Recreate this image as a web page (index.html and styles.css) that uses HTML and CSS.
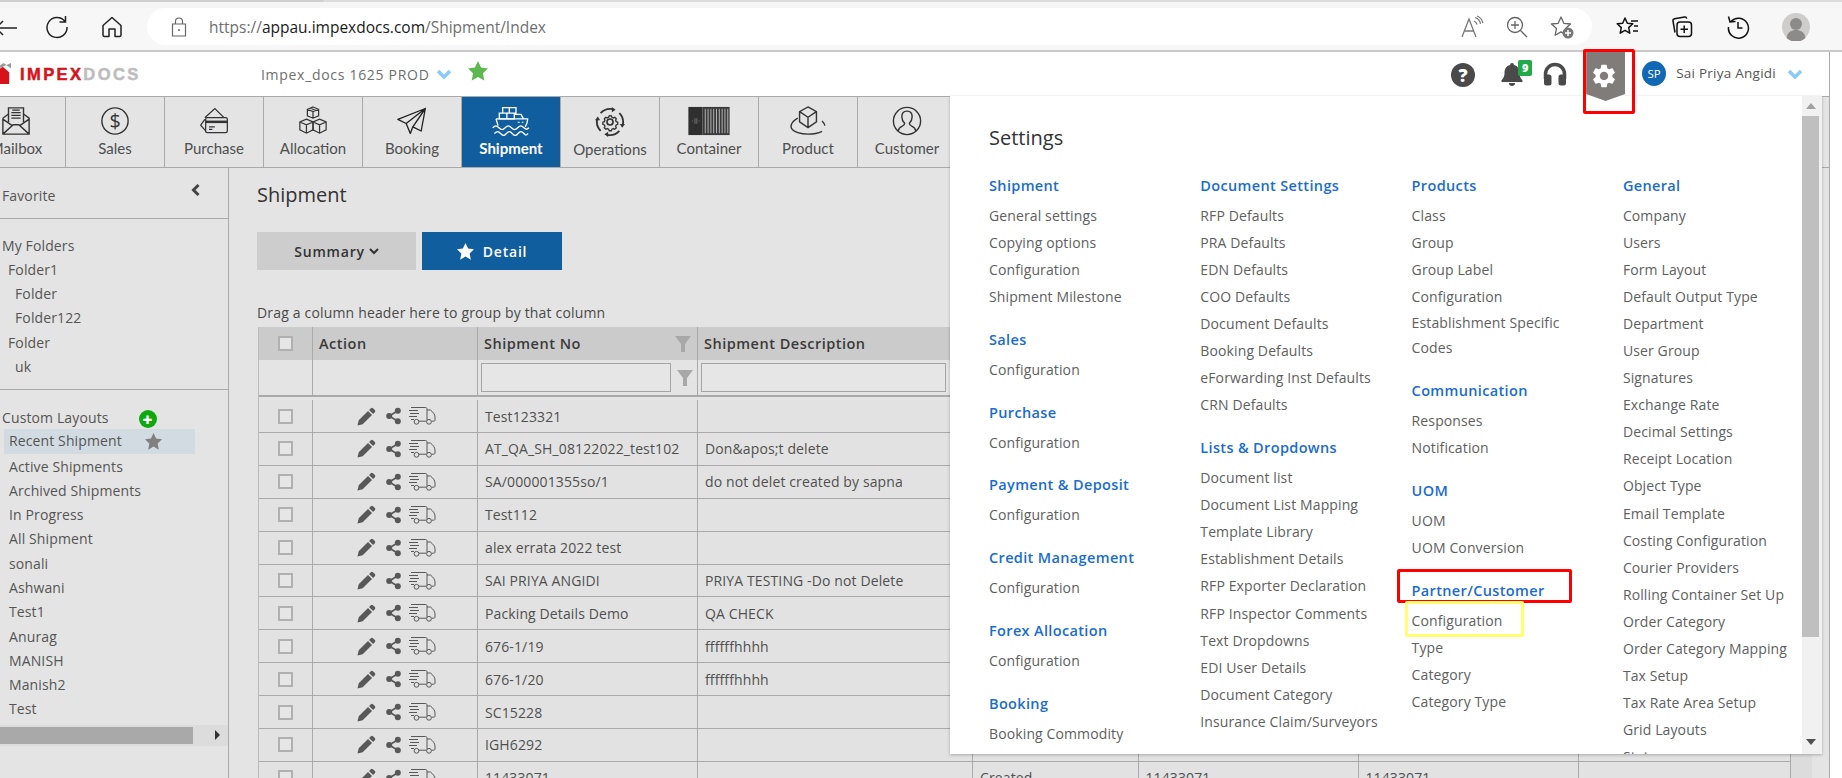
FILE: index.html
```html
<!DOCTYPE html>
<html lang="en">
<head>
<meta charset="utf-8">
<title>Shipment - ImpexDocs</title>
<link rel="stylesheet" href="styles.css">
</head>
<body>
<svg class="defs" width="0" height="0" aria-hidden="true">
  <symbol id="ic-pencil" viewBox="0 0 20 20"><path d="M14.600 1.200a1.600 1.600 0 0 1 2.200 0l2 2a1.600 1.600 0 0 1 0 2.200l-1.900 1.900-4.200-4.200zM11.600 4.200l4.200 4.200L6 18.200 0.500 19.600l1.300-5.600z" fill="currentColor"/></symbol>
  <symbol id="ic-share" viewBox="0 0 16 18"><circle cx="12.600" cy="3.400" r="3.200" fill="currentColor"/><circle cx="3.400" cy="9" r="3.200" fill="currentColor"/><circle cx="12.600" cy="14.600" r="3.200" fill="currentColor"/><path d="M12.600 3.400 3.400 9l9.200 5.600" fill="none" stroke="currentColor" stroke-width="1.800"/></symbol>
  <symbol id="ic-truck" viewBox="0 0 28 20"><g fill="none" stroke="currentColor" stroke-width="1"><path d="M3 1.500h14.500c1 0 1.500.5 1.500 1.500v11.500M19 4h3.500c2.500 2 4.500 4.500 4.500 7v3c0 .8-.5 1.200-1.500 1.200h-1.500M11 15.200h7M1 4.500h9M2 7.500h9M1 10.500h8M3 13.500h3"/><circle cx="8.500" cy="15.800" r="2.400"/><circle cx="21" cy="15.800" r="2.400"/></g></symbol>
  <symbol id="ic-funnel" viewBox="0 0 16 16"><path d="M0 0h16L10 8v8H6V8z" fill="currentColor"/></symbol>
</svg>

<div class="browser-strip"><span class="strip-tab"></span></div>
<div class="browser-bar">
  <svg class="br-icon br-back" viewBox="0 0 24 24"><path d="M24 13H3M10 6l-7 7 7 7" fill="none" stroke="#222" stroke-width="1.500"/></svg>
  <svg class="br-icon br-reload" viewBox="0 0 24 24"><path d="M20 6.500A10 10 0 1 0 22 12M20.500 1v6h-6" fill="none" stroke="#222" stroke-width="1.500"/></svg>
  <svg class="br-icon br-home" viewBox="0 0 24 24"><path d="M3 10.500 12 2.500l9 8V20a1.500 1.500 0 0 1-1.500 1.500H15V14H9v7.500H4.500A1.500 1.500 0 0 1 3 20z" fill="none" stroke="#222" stroke-width="1.500" stroke-linejoin="round"/></svg>
  <div class="url-pill">
    <svg class="lock" viewBox="0 0 16 20"><path d="M4.500 7V4.500a3.500 3.500 0 0 1 7 0V7M1.500 7h13v12h-13z" fill="none" stroke="#666" stroke-width="1.200"/><circle cx="8" cy="13" r="1" fill="#666"/></svg>
    <div class="url"><span class="url-dim">https://</span>appau.impexdocs.com<span class="url-dim">/Shipment/Index</span></div>
    <span class="pill-right">
      <svg class="pill-ic" viewBox="0 0 24 24"><path d="M2 22 9 4l7 18M4.500 16h9" fill="none" stroke="#777" stroke-width="1.300"/><path d="M14 6a5 5 0 0 1 3 3.500M15 2.500a8 8 0 0 1 5.500 6.500M17 1a10 10 0 0 1 6 7" fill="none" stroke="#777" stroke-width="1.200"/></svg>
      <svg class="pill-ic" viewBox="0 0 24 24"><circle cx="10" cy="10" r="7.500" fill="none" stroke="#666" stroke-width="1.300"/><path d="M15.500 15.500 22 22M6 10h8M10 6v8" fill="none" stroke="#666" stroke-width="1.300"/></svg>
      <svg class="pill-ic" viewBox="0 0 24 24"><path d="m11 2 2.800 6.300 6.700.7-5 4.600 1.400 6.700-5.900-3.400-5.900 3.400L6.500 13.600l-5-4.600 6.700-.7z" fill="none" stroke="#666" stroke-width="1.300" stroke-linejoin="round"/><circle cx="18" cy="18" r="5.500" fill="#777"/><path d="M18 15v6M15 18h6" stroke="#fff" stroke-width="1.500"/></svg>
    </span>
  </div>
  <svg class="tool-ic" viewBox="0 0 24 24"><path d="m9 3 2.300 5.200 5.500.6-4.100 3.800 1.100 5.600L9 15.400l-4.800 2.800 1.100-5.600L1.200 8.800l5.500-.6z" fill="none" stroke="#111" stroke-width="1.500" stroke-linejoin="round"/><path d="M15 6h7M18 11h4M17 16h5" stroke="#111" stroke-width="1.500"/></svg>
  <svg class="tool-ic" viewBox="0 0 24 24"><path d="M5 17.500 3 6a2 2 0 0 1 1.600-2.300L14.500 2a2 2 0 0 1 2.300 1.500" fill="none" stroke="#111" stroke-width="1.500"/><rect x="7" y="7" width="14.500" height="14.500" rx="3" fill="none" stroke="#111" stroke-width="1.500"/><path d="M14.200 10.500v7.500M10.500 14.200H18" stroke="#111" stroke-width="1.500"/></svg>
  <svg class="tool-ic" viewBox="0 0 24 24"><path d="M5 6.500A10 10 0 1 1 2.500 12M2.500 1.500 4 7l5.500-.5" fill="none" stroke="#111" stroke-width="1.500"/><path d="M12 7v6h4.500" fill="none" stroke="#111" stroke-width="1.500"/></svg>
  <svg class="profile" viewBox="0 0 28 28"><circle cx="14" cy="14" r="14" fill="#cfcdcb"/><circle cx="14" cy="11" r="6" fill="#8d8b89"/><path d="M4.500 25c1-6 5-8 9.500-8s8.500 2 9.500 8a14 14 0 0 1-19 0z" fill="#8d8b89"/></svg>
</div>

<div class="app">
  <header class="app-header">
    <div class="logo">
      <svg class="logo-mark" viewBox="0 0 12 24"><path d="M-10 10 4 0l8 6v-6" fill="#9a9a9a"/><path d="M-6 11 3 4l7 6v13H-6z" fill="#d8121b"/></svg>
      <span class="logo-text"><span class="logo-red">IMPEX</span><span class="logo-gray">DOCS</span></span>
    </div>
    <span class="ws-name">Impex_docs 1625 PROD</span>
    <svg class="chev chev-ws" viewBox="0 0 16 10"><path d="m2 2 6 6 6-6" fill="none" stroke="#8ccaf7" stroke-width="3.500"/></svg>
    <svg class="ws-star" viewBox="0 0 24 24"><path d="m12 0 3.700 7.900 8.300 1-6.100 5.900 1.600 8.700L12 19.200l-7.500 4.300 1.600-8.700L0 8.900l8.300-1z" fill="#5cb84f"/></svg>
    <div class="header-right">
      <span class="help">?</span>
      <span class="bell-wrap">
        <svg class="bell" viewBox="0 0 24 24"><path d="M12 1a2 2 0 0 1 2 2c4 1 5.500 4 5.500 8 0 4 1.500 5.500 3 7.500v1.500h-21v-1.500c1.500-2 3-3.500 3-7.500 0-4 1.500-7 5.500-8a2 2 0 0 1 2-2zM9 21h6a3 3 0 0 1-6 0z" fill="#4a4a4a"/></svg>
        <span class="bell-badge">9</span>
      </span>
      <svg class="phones" viewBox="0 0 24 24"><path d="M2.500 17v-5a9.500 9.500 0 0 1 19 0v5" fill="none" stroke="#4a4a4a" stroke-width="3.500"/><rect x="1" y="12.500" width="7.500" height="11" rx="2.500" fill="#4a4a4a"/><rect x="15.500" y="12.500" width="7.500" height="11" rx="2.500" fill="#4a4a4a"/></svg>
      <span class="gear-badge">
        <svg class="gear" viewBox="0 0 24 24"><path fill="#fff" d="M19.140 12.940c.04-.3.06-.61.06-.94 0-.32-.02-.64-.07-.94l2.030-1.580c.18-.14.23-.41.12-.61l-1.920-3.320c-.12-.22-.37-.29-.59-.22l-2.390.96c-.5-.38-1.030-.7-1.620-.94l-.36-2.540c-.04-.24-.24-.41-.48-.41h-3.840c-.24 0-.43.17-.47.41l-.36 2.540c-.59.24-1.130.57-1.620.94l-2.390-.96c-.22-.08-.47 0-.59.22L2.740 8.870c-.12.21-.08.47.12.61l2.030 1.580c-.05.3-.09.63-.09.94s.02.64.07.94l-2.030 1.580c-.18.14-.23.41-.12.61l1.920 3.320c.12.22.37.29.59.22l2.390-.96c.5.38 1.030.7 1.620.94l.36 2.540c.05.24.24.41.48.41h3.840c.24 0 .44-.17.47-.41l.36-2.540c.59-.24 1.130-.56 1.620-.94l2.390.96c.22.08.47 0 .59-.22l1.920-3.320c.12-.22.07-.47-.12-.61l-2.010-1.580zM12 15.600c-1.980 0-3.600-1.620-3.600-3.600s1.620-3.600 3.600-3.600 3.600 1.620 3.600 3.600-1.620 3.600-3.600 3.600z"/></svg>
      </span>
      <span class="avatar">SP</span>
      <span class="user-name">Sai Priya Angidi</span>
      <svg class="chev chev-user" viewBox="0 0 16 10"><path d="m2 2 6 6 6-6" fill="none" stroke="#8ccaf7" stroke-width="3.500"/></svg>
    </div>
  </header>

  <nav class="tabs">
    <div class="tab"><svg class="tab-ic" viewBox="0 0 32 32"><g fill="none" stroke="#333" stroke-width="1.500"><path d="M2 13v17h28V13L24 8.500M2 13l6-4.500M2 30l11-10h6l11 10M2 14l10 7M30 14l-10 7"/><path d="M8 17V2h16v15" fill="#e4e4e4"/><path d="M11 7h10M11 10h10M11 13h10M12 4.500h8" stroke-width="1.300"/></g></svg><span class="tab-label">Mailbox</span></div>
    <div class="tab"><svg class="tab-ic" viewBox="0 0 32 32"><circle cx="16" cy="16" r="14" fill="none" stroke="#333" stroke-width="1.500"/><text x="16" y="23" class="dollar">$</text></svg><span class="tab-label">Sales</span></div>
    <div class="tab"><svg class="tab-ic" viewBox="0 0 36 32"><g fill="none" stroke="#333" stroke-width="1.500"><path d="M7 12 19 1l11 11M9 29 2 21l5-7"/><rect x="8" y="12" width="26" height="18" rx="2" fill="#e4e4e4"/><path d="M8 17h26" stroke-width="3"/><path d="M12 23h7M12 26h4"/></g></svg><span class="tab-label">Purchase</span></div>
    <div class="tab"><svg class="tab-ic" viewBox="0 0 32 32"><g fill="none" stroke="#333" stroke-width="1.300"><path d="m16 1 6 2.500v7L16 13l-6-2.500v-7zM10 3.500 16 6l6-2.500M16 6v7M13 2.200l6 2.600"/><path d="m9 14 7 3v8.500L9 29l-7-3.500V17zM2 17l7 3 7-3M9 20v9"/><path d="m23 14 7 3v8.500L23 29l-7-3.500V17zM16 17l7 3 7-3M23 20v9"/></g></svg><span class="tab-label">Allocation</span></div>
    <div class="tab"><svg class="tab-ic" viewBox="0 0 36 32"><g fill="none" stroke="#222" stroke-width="1.600" stroke-linejoin="round"><path d="M34 1 1 14l10 5zM34 1 11 19l5 12 3-8zM34 1l-5 27-10-5M16 31l-5-12"/></g></svg><span class="tab-label">Booking</span></div>
    <div class="tab tab-active"><svg class="tab-ic tab-ic-wide" viewBox="0 0 46 36"><g fill="none" stroke="#fff" stroke-width="1.600"><path d="M13 2h8v6.500h-8zM21 2h8v6.500h-8zM9 8.500h9v7H9zM18 8.500h9v7h-9zM27 10h8l3 5.500"/><path d="M5 15.500h38c0 4-1.500 7-3 9.500M5 15.500l2.500 8"/><path d="M31 19.500h2.500M36 19.500h2" stroke-width="1.300"/><path d="M1 26c3.500-3 4.500-3 7.500 0s4.500 3 7.500 0 4.500-3 7.500 0 4.500 3 7.500 0 4.500-3 7.500 0 3.500 2 6 0"/><path d="M3 33c3.500-3 4.500-3 7.500 0s4.500 3 7 0 4.500-3 7 0 4.500 3 7 0 4.500-3 7 0 3 2 5 0"/></g></svg><span class="tab-label tab-label-active">Shipment</span></div>
    <div class="tab tab-ops"><svg class="tab-ic" viewBox="0 0 32 32"><g fill="none" stroke="#333" stroke-width="1.800"><circle cx="16" cy="16" r="3.200"/><path d="M16 7.500l1.800.3.8 2 1.900.8 1.900-.9 2 2-.9 1.900.8 1.900 2 .8v2.800l-2 .8-.8 1.900.9 1.900-2 2-1.900-.9-1.900.8-.8 2h-2.800l-.8-2-1.900-.8-1.900.9-2-2 .9-1.900-.8-1.900-2-.8v-2.800l2-.8.8-1.900-.9-1.900 2-2 1.900.9 1.900-.8.8-2z" transform="translate(3.200 3.200) scale(.8)"/><path d="M6 6.500A14 14 0 0 1 19 2.300M26 6.500A14 14 0 0 1 29.700 19M26 25.500A14 14 0 0 1 13 29.700M6 25.500A14 14 0 0 1 2.300 13" stroke-width="2"/></g><g fill="#333"><path d="m18 0 4 3-4 2.500zM32 18l-3 4-2.500-4zM14 32l-4-3 4-2.500zM0 14l3-4 2.500 4z"/></g></svg><span class="tab-label">Operations</span></div>
    <div class="tab"><svg class="tab-ic tab-ic-wide" viewBox="0 0 44 32"><rect x="0" y="1" width="15" height="30" fill="#2f2f2f"/><path d="M7 13v6M9 13v6M4 16h1M11 16h1" stroke="#888" stroke-width=".800"/><rect x="15" y="1" width="29" height="30" fill="#3a3a3a"/><path d="M18 3v26M21 3v26M24 3v26M27 3v26M30 3v26M33 3v26M36 3v26M39 3v26M42 3v26" stroke="#bbb" stroke-width="1"/></svg><span class="tab-label">Container</span></div>
    <div class="tab"><svg class="tab-ic tab-ic-wide" viewBox="0 0 40 32"><g fill="none" stroke="#333" stroke-width="1.500"><path d="m20 1 9 5v11l-9 6-9-6V6zM11 6l9 6 9-6M20 12v11"/><path d="M9 13C4 16 1 19 2 23c2 5 11 7 18 7 6 0 11-1 15-3M38 21c0-2-1-3-3-5" /></g></svg><span class="tab-label">Product</span></div>
    <div class="tab tab-last"><svg class="tab-ic" viewBox="0 0 32 32"><g fill="none" stroke="#333" stroke-width="1.500"><circle cx="16" cy="16" r="14.500"/><path d="M6.500 27c.5-3 2-4.500 4.500-5.500 2-.8 2.500-1.500 2.500-3-2-2-3-4-3-7 0-3.500 2-6 5.500-6s5.500 2.500 5.500 6c0 3-1 5-3 7 0 1.500.5 2.200 2.500 3 2.500 1 4 2.500 4.500 5.500"/></g></svg><span class="tab-label">Customer</span></div>
  </nav>

  <div class="content">
    <aside class="sidebar">
      <div class="side-fav">
        <span>Favorite</span>
        <svg class="side-collapse" viewBox="0 0 10 12"><path d="M7.500 1 2.500 6l5 5" fill="none" stroke="#444" stroke-width="3"/></svg>
      </div>
      <div class="side-folders">
        <div class="side-line">My Folders</div>
        <div class="side-line lvl-1">Folder1</div>
        <div class="side-line lvl-2">Folder</div>
        <div class="side-line lvl-2">Folder122</div>
        <div class="side-line lvl-1 gap-top">Folder</div>
        <div class="side-line lvl-2">uk</div>
      </div>
      <div class="side-layouts">
        <div class="side-line layouts-title"><span>Custom Layouts</span><span class="plus">+</span></div>
        <div class="layout-current"><span class="current-name">Recent Shipment</span>
          <svg class="current-star" viewBox="0 0 24 24"><path d="m12 0 3.700 7.900 8.300 1-6.100 5.900 1.600 8.700L12 19.200l-7.500 4.300 1.600-8.700L0 8.900l8.300-1z" fill="#808080"/></svg>
        </div>
        <div class="layout-item">Active Shipments</div>
        <div class="layout-item">Archived Shipments</div>
        <div class="layout-item">In Progress</div>
        <div class="layout-item">All Shipment</div>
        <div class="layout-item">sonali</div>
        <div class="layout-item">Ashwani</div>
        <div class="layout-item">Test1</div>
        <div class="layout-item">Anurag</div>
        <div class="layout-item">MANISH</div>
        <div class="layout-item">Manish2</div>
        <div class="layout-item">Test</div>
      </div>
      <div class="side-scroll"><span class="side-thumb"></span><span class="side-arrow"></span></div>
    </aside>

    <main class="main">
      <h1 class="page-title">Shipment</h1>
      <div class="view-btns">
        <button class="btn-summary">Summary <svg class="btn-caret" viewBox="0 0 10 7"><path d="m1 1 4 4 4-4" fill="none" stroke="#333" stroke-width="2"/></svg></button>
        <button class="btn-detail"><svg class="btn-star" viewBox="0 0 24 24"><path d="m12 0 3.700 7.900 8.300 1-6.100 5.900 1.600 8.700L12 19.200l-7.500 4.300 1.600-8.700L0 8.900l8.300-1z" fill="#fff"/></svg>Detail</button>
      </div>
      <div class="drag-hint">Drag a column header here to group by that column</div>
      <div class="grid-wrap">
        <div class="grid">
          <div class="g-head">
            <div class="c"><span class="cb"></span></div>
            <div class="c c-text">Action</div>
            <div class="c c-text c-between">Shipment No<svg class="funnel" viewBox="0 0 16 16"><use href="#ic-funnel"/></svg></div>
            <div class="c c-text">Shipment Description</div>
            <div class="c"></div><div class="c"></div><div class="c"></div><div class="c"></div>
          </div>
          <div class="g-filter">
            <div class="c"></div>
            <div class="c"></div>
            <div class="c c-filter"><span class="f-input"></span><svg class="funnel" viewBox="0 0 16 16"><use href="#ic-funnel"/></svg></div>
            <div class="c c-filter"><span class="f-input f-input-desc"></span></div>
            <div class="c"></div><div class="c"></div><div class="c"></div><div class="c"></div>
          </div>
          <div class="g-row"><div class="c"><span class="cb"></span></div><div class="c c-act"><svg class="a-pencil"><use href="#ic-pencil"/></svg><svg class="a-share"><use href="#ic-share"/></svg><svg class="a-truck"><use href="#ic-truck"/></svg></div><div class="c c-data">Test123321</div><div class="c c-data"></div><div class="c"></div><div class="c"></div><div class="c"></div><div class="c"></div></div>
          <div class="g-row"><div class="c"><span class="cb"></span></div><div class="c c-act"><svg class="a-pencil"><use href="#ic-pencil"/></svg><svg class="a-share"><use href="#ic-share"/></svg><svg class="a-truck"><use href="#ic-truck"/></svg></div><div class="c c-data">AT_QA_SH_08122022_test102</div><div class="c c-data">Don&amp;apos;t delete</div><div class="c"></div><div class="c"></div><div class="c"></div><div class="c"></div></div>
          <div class="g-row"><div class="c"><span class="cb"></span></div><div class="c c-act"><svg class="a-pencil"><use href="#ic-pencil"/></svg><svg class="a-share"><use href="#ic-share"/></svg><svg class="a-truck"><use href="#ic-truck"/></svg></div><div class="c c-data">SA/000001355so/1</div><div class="c c-data">do not delet created by sapna</div><div class="c"></div><div class="c"></div><div class="c"></div><div class="c"></div></div>
          <div class="g-row"><div class="c"><span class="cb"></span></div><div class="c c-act"><svg class="a-pencil"><use href="#ic-pencil"/></svg><svg class="a-share"><use href="#ic-share"/></svg><svg class="a-truck"><use href="#ic-truck"/></svg></div><div class="c c-data">Test112</div><div class="c c-data"></div><div class="c"></div><div class="c"></div><div class="c"></div><div class="c"></div></div>
          <div class="g-row"><div class="c"><span class="cb"></span></div><div class="c c-act"><svg class="a-pencil"><use href="#ic-pencil"/></svg><svg class="a-share"><use href="#ic-share"/></svg><svg class="a-truck"><use href="#ic-truck"/></svg></div><div class="c c-data">alex errata 2022 test</div><div class="c c-data"></div><div class="c"></div><div class="c"></div><div class="c"></div><div class="c"></div></div>
          <div class="g-row"><div class="c"><span class="cb"></span></div><div class="c c-act"><svg class="a-pencil"><use href="#ic-pencil"/></svg><svg class="a-share"><use href="#ic-share"/></svg><svg class="a-truck"><use href="#ic-truck"/></svg></div><div class="c c-data">SAI PRIYA ANGIDI</div><div class="c c-data">PRIYA TESTING -Do not Delete</div><div class="c"></div><div class="c"></div><div class="c"></div><div class="c"></div></div>
          <div class="g-row"><div class="c"><span class="cb"></span></div><div class="c c-act"><svg class="a-pencil"><use href="#ic-pencil"/></svg><svg class="a-share"><use href="#ic-share"/></svg><svg class="a-truck"><use href="#ic-truck"/></svg></div><div class="c c-data">Packing Details Demo</div><div class="c c-data">QA CHECK</div><div class="c"></div><div class="c"></div><div class="c"></div><div class="c"></div></div>
          <div class="g-row"><div class="c"><span class="cb"></span></div><div class="c c-act"><svg class="a-pencil"><use href="#ic-pencil"/></svg><svg class="a-share"><use href="#ic-share"/></svg><svg class="a-truck"><use href="#ic-truck"/></svg></div><div class="c c-data">676-1/19</div><div class="c c-data">ffffffhhhh</div><div class="c"></div><div class="c"></div><div class="c"></div><div class="c"></div></div>
          <div class="g-row"><div class="c"><span class="cb"></span></div><div class="c c-act"><svg class="a-pencil"><use href="#ic-pencil"/></svg><svg class="a-share"><use href="#ic-share"/></svg><svg class="a-truck"><use href="#ic-truck"/></svg></div><div class="c c-data">676-1/20</div><div class="c c-data">ffffffhhhh</div><div class="c"></div><div class="c"></div><div class="c"></div><div class="c"></div></div>
          <div class="g-row"><div class="c"><span class="cb"></span></div><div class="c c-act"><svg class="a-pencil"><use href="#ic-pencil"/></svg><svg class="a-share"><use href="#ic-share"/></svg><svg class="a-truck"><use href="#ic-truck"/></svg></div><div class="c c-data">SC15228</div><div class="c c-data"></div><div class="c"></div><div class="c"></div><div class="c"></div><div class="c"></div></div>
          <div class="g-row"><div class="c"><span class="cb"></span></div><div class="c c-act"><svg class="a-pencil"><use href="#ic-pencil"/></svg><svg class="a-share"><use href="#ic-share"/></svg><svg class="a-truck"><use href="#ic-truck"/></svg></div><div class="c c-data">IGH6292</div><div class="c c-data"></div><div class="c"></div><div class="c"></div><div class="c"></div><div class="c"></div></div>
          <div class="g-row"><div class="c"><span class="cb"></span></div><div class="c c-act"><svg class="a-pencil"><use href="#ic-pencil"/></svg><svg class="a-share"><use href="#ic-share"/></svg><svg class="a-truck"><use href="#ic-truck"/></svg></div><div class="c c-data">11433071</div><div class="c c-data"></div><div class="c c-data">Created</div><div class="c c-data">11433071</div><div class="c c-data">11433071</div><div class="c"></div></div>
        </div>
        <div class="grid-track"></div>
      </div>
    </main>
  </div>
</div>

<section class="settings">
  <div class="settings-body">
    <h2 class="settings-title">Settings</h2>
    <div class="settings-cols">
      <div class="s-col">
        <div class="s-group"><h3 class="s-head">Shipment</h3><div class="s-item">General settings</div><div class="s-item">Copying options</div><div class="s-item">Configuration</div><div class="s-item">Shipment Milestone</div></div>
        <div class="s-group"><h3 class="s-head">Sales</h3><div class="s-item">Configuration</div></div>
        <div class="s-group"><h3 class="s-head">Purchase</h3><div class="s-item">Configuration</div></div>
        <div class="s-group"><h3 class="s-head">Payment &amp; Deposit</h3><div class="s-item">Configuration</div></div>
        <div class="s-group"><h3 class="s-head">Credit Management</h3><div class="s-item">Configuration</div></div>
        <div class="s-group"><h3 class="s-head">Forex Allocation</h3><div class="s-item">Configuration</div></div>
        <div class="s-group"><h3 class="s-head">Booking</h3><div class="s-item">Booking Commodity</div></div>
      </div>
      <div class="s-col">
        <div class="s-group"><h3 class="s-head">Document Settings</h3><div class="s-item">RFP Defaults</div><div class="s-item">PRA Defaults</div><div class="s-item">EDN Defaults</div><div class="s-item">COO Defaults</div><div class="s-item">Document Defaults</div><div class="s-item">Booking Defaults</div><div class="s-item">eForwarding Inst Defaults</div><div class="s-item">CRN Defaults</div></div>
        <div class="s-group"><h3 class="s-head">Lists &amp; Dropdowns</h3><div class="s-item">Document list</div><div class="s-item">Document List Mapping</div><div class="s-item">Template Library</div><div class="s-item">Establishment Details</div><div class="s-item">RFP Exporter Declaration</div><div class="s-item">RFP Inspector Comments</div><div class="s-item">Text Dropdowns</div><div class="s-item">EDI User Details</div><div class="s-item">Document Category</div><div class="s-item">Insurance Claim/Surveyors</div></div>
      </div>
      <div class="s-col">
        <div class="s-group"><h3 class="s-head">Products</h3><div class="s-item">Class</div><div class="s-item">Group</div><div class="s-item">Group Label</div><div class="s-item">Configuration</div><div class="s-item s-item-wrap">Establishment Specific Codes</div></div>
        <div class="s-group"><h3 class="s-head">Communication</h3><div class="s-item">Responses</div><div class="s-item">Notification</div></div>
        <div class="s-group"><h3 class="s-head">UOM</h3><div class="s-item">UOM</div><div class="s-item">UOM Conversion</div></div>
        <div class="s-group"><h3 class="s-head">Partner/Customer</h3><div class="s-item">Configuration</div><div class="s-item">Type</div><div class="s-item">Category</div><div class="s-item">Category Type</div></div>
      </div>
      <div class="s-col">
        <div class="s-group"><h3 class="s-head">General</h3><div class="s-item">Company</div><div class="s-item">Users</div><div class="s-item">Form Layout</div><div class="s-item">Default Output Type</div><div class="s-item">Department</div><div class="s-item">User Group</div><div class="s-item">Signatures</div><div class="s-item">Exchange Rate</div><div class="s-item">Decimal Settings</div><div class="s-item">Receipt Location</div><div class="s-item">Object Type</div><div class="s-item">Email Template</div><div class="s-item">Costing Configuration</div><div class="s-item">Courier Providers</div><div class="s-item">Rolling Container Set Up</div><div class="s-item">Order Category</div><div class="s-item">Order Category Mapping</div><div class="s-item">Tax Setup</div><div class="s-item">Tax Rate Area Setup</div><div class="s-item">Grid Layouts</div><div class="s-item">Status</div></div>
      </div>
    </div>
  </div>
  <div class="s-scroll"><span class="s-up"></span><span class="s-thumb"></span><span class="s-down"></span></div>
</section>

<div class="mark mark-gear"></div>
<div class="mark mark-partner"></div>
<div class="mark mark-config"></div>
</body>
</html>
```

FILE: styles.css
```css
* { box-sizing: border-box; }
html, body { margin: 0; padding: 0; }
body {
  position: relative;
  width: 1842px;
  height: 778px;
  overflow: hidden;
  background: #fff;
  font-family: "Open Sans", "Liberation Sans", sans-serif;
  font-size: 14px;
  color: #555;
}
.defs { position: absolute; }

/* Browser chrome */
.browser-strip { height: 8px; background: #f5f5f5; border-top: 2px solid #dcdcdc; }
.strip-tab { display: block; width: 324px; height: 2px; background: #cfcfcf; margin-top: -2px; border-radius: 0 0 4px 0; }
.browser-bar {
  display: flex;
  align-items: flex-start;
  height: 44px;
  background: #f7f7f7;
  border-bottom: 2px solid #c9c9c9;
}
.br-icon { width: 24px; height: 24px; flex: none; margin-top: 7px; }
.br-back { margin-left: -7px; }
.br-reload { margin-left: 28px; }
.br-home { margin-left: 31px; }
.url-pill {
  display: flex;
  align-items: center;
  width: 1445px;
  height: 37px;
  margin-left: 23px;
  background: #fff;
  border-radius: 19px;
}
.lock { width: 16px; height: 20px; margin-left: 24px; flex: none; }
.url { margin-left: 22px; font-size: 15.500px; color: #1a1a1a; white-space: nowrap; font-family: "Open Sans", sans-serif; }
.url-dim { color: #6f6f6f; }
.pill-right { display: flex; align-items: center; gap: 21px; margin-left: auto; margin-right: 18px; }
.pill-ic { width: 24px; height: 24px; }
.tool-ic { width: 24px; height: 24px; flex: none; margin: 7px 0 0 0; }
.url-pill + .tool-ic { margin-left: 24px; }
.tool-ic + .tool-ic { margin-left: 30px; }
.tool-ic + .tool-ic + .tool-ic { margin-left: 32px; }
.profile { width: 28px; height: 28px; flex: none; margin: 5px 0 0 32px; }

/* App */
.app { width: 1830px; height: 726px; border-right: 1px solid #aaa; overflow: hidden; }
.app-header { display: flex; align-items: center; height: 44px; background: #fff; position: relative; }
.logo { display: flex; align-items: center; width: 261px; flex: none; }
.logo-mark { width: 11px; height: 24px; flex: none; }
.logo-text { margin-left: 9px; font-family: "Liberation Sans", sans-serif; font-weight: 700; font-size: 16.500px; letter-spacing: 2.400px; -webkit-text-stroke: .5px; white-space: nowrap; }
.logo-red { color: #d8121b; }
.logo-gray { color: #bdbdbd; }
.ws-name { font-size: 14px; letter-spacing: .7px; color: #6e6e6e; white-space: nowrap; }
.chev { width: 16px; height: 10px; flex: none; }
.chev-ws { margin-left: 6px; }
.ws-star { width: 20px; height: 20px; margin: -6px 0 0 16px; flex: none; }
.header-right { display: flex; align-items: center; margin-left: auto; padding-right: 26px; height: 100%; }
.help {
  display: flex; align-items: center; justify-content: center;
  width: 24px; height: 24px; border-radius: 50%;
  background: #4a4a4a; color: #fff; font-weight: 800; font-size: 18px; line-height: 1;
  margin-top: 1px;
}
.bell-wrap { position: relative; display: block; width: 24px; height: 24px; margin-left: 25px; }
.bell { display: block; width: 24px; height: 24px; }
.bell-badge {
  position: absolute; left: 18px; top: -2px;
  width: 14px; height: 16px; border-radius: 2px;
  background: #22a94a; color: #fff; font-size: 11px; font-weight: 800; line-height: 15px; text-align: center;
}
.phones { width: 24px; height: 24px; margin-left: 19px; flex: none; }
.gear-badge {
  display: flex; justify-content: center; align-items: flex-start;
  position: relative; z-index: 3;
  align-self: flex-start;
  width: 39px; height: 49px; margin-left: 19px; margin-bottom: -5px; padding: 10px 4px 0 0;
  background: #807c7a;
  clip-path: polygon(0 0, 100% 0, 100% 42px, 50% 49px, 0 42px);
}
.gear { width: 28px; height: 28px; }
.avatar {
  display: flex; align-items: center; justify-content: center;
  width: 24px; height: 25px; border-radius: 50%;
  margin-left: 17px; margin-top: -2px;
  background: #1168b4; color: #fff; font-size: 11.500px;
}
.user-name { margin-left: 10px; color: #555; font-size: 13.500px; letter-spacing: .25px; margin-top: -2px; white-space: nowrap; }
.chev-user { margin-left: 11px; }

/* Tabs */
.tabs {
  display: flex;
  height: 72px;
  margin-left: -33px;
  width: 1864px;
  background: #e4e4e4;
  border-top: 1px solid #aaa;
  border-bottom: 1px solid #aaa;
}
.tab {
  display: flex; flex-direction: column; align-items: center;
  width: 99px; flex: none;
  padding-top: 9px;
  border-right: 1px solid #aaa;
}
.tab-active { background: #115e9f; }
.tab-ic { width: 30px; height: 30px; display: block; }
.tab-ic-wide { width: 44px; }
.tab-label { margin-top: 2px; font-family: Lato, sans-serif; font-size: 15px; line-height: 20px; color: #4f4f4f; white-space: nowrap; }
.tab-label-active { color: #fff; font-weight: 700; }
.tab-ops .tab-ic { margin-top: 1px; }
.tab-ops .tab-label { margin-top: 2px; }
.dollar { font-family: "Open Sans", sans-serif; font-size: 21px; fill: #333; text-anchor: middle; }

/* Content */
.content { display: flex; height: 610px; background: #e4e4e4; }
.sidebar { width: 229px; flex: none; border-right: 1px solid #aaa; letter-spacing: .12px; }
.side-fav {
  display: flex; justify-content: space-between;
  height: 51px; padding: 18px 27px 0 2px;
  line-height: 20px;
  border-bottom: 1px solid #aaa;
}
.side-collapse { width: 10px; height: 12px; margin-top: -2px; }
.side-folders { padding: 15px 0 10px 2px; border-bottom: 1px solid #aaa; }
.side-line { line-height: 24px; }
.lvl-1 { padding-left: 6px; }
.lvl-2 { padding-left: 13px; }
.gap-top { margin-top: 1px; }
.side-layouts { padding-top: 16px; }
.layouts-title { display: flex; align-items: center; padding-left: 2px; margin-bottom: -1px; }
.plus {
  display: flex; align-items: center; justify-content: center;
  width: 18px; height: 18px; margin-left: 30px; margin-top: 2px;
  border-radius: 50%; background: #0fa80f; color: #fff; font-size: 17px; font-weight: 800; line-height: 1;
}
.layout-current {
  display: flex; align-items: center;
  width: 191px; height: 25px; margin: 0 0 .5px 4px; padding-left: 5px;
  line-height: 22px;
  background: #d2dbe2;
}
.current-name { padding-bottom: 2px; }
.current-star { width: 17px; height: 17px; margin-left: 23px; }
.layout-item { padding-left: 9px; line-height: 24.300px; }
.side-scroll {
  display: flex; align-items: center;
  height: 21px; margin-top: 3px;
  background: #dcdcdc;
}
.side-thumb { width: 193px; height: 17px; background: #a9a9a9; }
.side-arrow { margin-left: 22px; border-left: 5px solid #333; border-top: 5px solid transparent; border-bottom: 5px solid transparent; }

.main { flex: 1; min-width: 0; padding-left: 28px; overflow: hidden; }
.page-title { margin: 13px 0 0; font-size: 20px; line-height: 28px; font-weight: 400; color: #333; }
.view-btns { display: flex; gap: 6px; margin-top: 23px; }
.btn-summary, .btn-detail {
  display: flex; align-items: center; justify-content: center;
  height: 38px; border: 0; padding: 0;
  font-family: "Open Sans", sans-serif; font-size: 14px; font-weight: 600; letter-spacing: .8px;
}
.btn-summary { width: 159px; background: #cdcdcd; color: #333; gap: 4px; }
.btn-caret { width: 10px; height: 7px; }
.btn-detail { width: 140px; background: #115e9f; color: #fff; gap: 9px; }
.btn-star { width: 17px; height: 17px; }
.drag-hint { margin-top: 33px; line-height: 20px; color: #4a4a4a; letter-spacing: .17px; }
.grid-wrap { display: flex; margin-top: 4px; }
.grid { width: 1533px; margin-left: 1px; flex: none; border-left: 1px solid #bbb; }
.grid-track { width: 21px; height: 460px; background: #dcdcdc; }
.g-head, .g-filter, .g-row {
  display: grid;
  grid-template-columns: 54px 165px 220px 275px 165.500px 220px 220px 212px;
}
.g-head { height: 33px; background: #cbcbcb; }
.g-filter { height: 37px; border-bottom: 2px solid #aaa; }
.g-row { height: 32.900px; border-bottom: 1px solid #aaa; background: #e2e2e2; }
.g-filter + .g-row { margin-top: 3px; height: 33px; }
.c { display: flex; align-items: center; min-width: 0; border-right: 1px solid #aaa; white-space: nowrap; overflow: hidden; }
.cb { width: 15px; height: 15px; margin-left: 19px; border: 2px solid #b0b0b0; background: #e6e6e6; flex: none; }
.c-text { padding-left: 6px; font-weight: 600; font-size: 14.500px; color: #3a3a3a; letter-spacing: .5px; }
.c-between { justify-content: space-between; padding-right: 6px; }
.funnel { width: 16px; height: 16px; color: #a8a8a8; flex: none; }
.c-filter { padding-left: 3px; }
.f-input { width: 190px; height: 29px; background: #e6e6e6; border: 1px solid #a5a5a5; flex: none; margin-right: 6px; }
.f-input-desc { width: 245px; margin-left: 0; }
.c-data { padding-left: 7px; color: #505050; font-size: 14px; letter-spacing: .12px; }
.c-act { padding-left: 44px; color: #585858; }
.a-pencil { width: 19px; height: 19px; flex: none; }
.a-share { width: 15px; height: 18px; margin-left: 10px; flex: none; }
.a-truck { width: 28px; height: 20px; margin-left: 7px; flex: none; }

/* Settings panel */
.settings {
  position: absolute; left: 950px; top: 96px; z-index: 2;
  display: flex;
  width: 872px; height: 658px;
  background: #fff;
  overflow: hidden;
  box-shadow: 0 1px 3px rgba(0,0,0,.25);
}
.settings-body { flex: 1; min-width: 0; padding: 28px 0 0 39px; overflow: hidden; }
.settings-title { margin: 0; font-size: 20px; line-height: 28px; font-weight: 400; color: #333; }
.settings-cols { display: grid; grid-template-columns: repeat(4, 211.300px); margin-top: 16.500px; }
.s-col { padding-right: 25px; min-width: 0; }
.s-group { margin-bottom: 12.800px; }
.s-head { margin: 0; height: 33px; line-height: 33px; font-size: 14.500px; font-weight: 600; color: #1a6dcc; letter-spacing: .35px; white-space: nowrap; }
.s-item { height: 27.100px; line-height: 27px; color: #606060; white-space: nowrap; letter-spacing: .12px; }
.s-item-wrap { height: 51px; line-height: 25.500px; white-space: normal; }
.s-scroll { display: flex; flex-direction: column; align-items: center; width: 20px; flex: none; padding-right: 3px; background: #f1f1f1; }
.s-up { margin-top: 7px; border-bottom: 6px solid #a0a0a0; border-left: 5px solid transparent; border-right: 5px solid transparent; }
.s-thumb { width: 17px; height: 521px; margin-top: 7px; background: #bfbfbf; }
.s-down { margin-top: auto; margin-bottom: 9px; border-top: 6px solid #505050; border-left: 5px solid transparent; border-right: 5px solid transparent; }

/* Annotation boxes */
.mark { position: absolute; z-index: 4; border-radius: 2px; }
.mark-gear { left: 1583px; top: 49px; width: 52px; height: 65px; border: 3px solid #f00; }
.mark-partner { left: 1397px; top: 569px; width: 175px; height: 34px; border: 3px solid #f00; }
.mark-config { left: 1405px; top: 601px; width: 119px; height: 36px; border: 3px solid #ffff70; }
```
